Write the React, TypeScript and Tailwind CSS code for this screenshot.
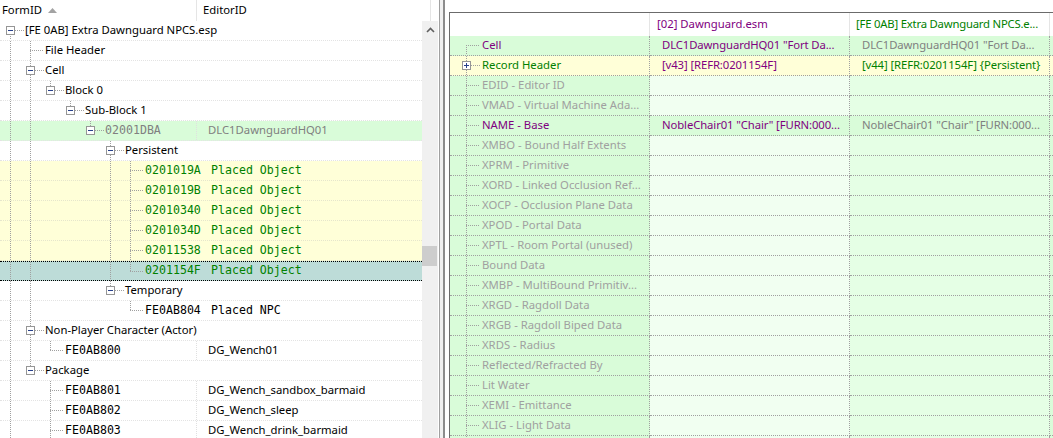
import React from "react";

type Self = "full" | "top" | "bottom";

// dotted tree guides, drawn per row
function Guides({
  depth,
  full = [],
  self,
  box = false,
  plus = false,
  base = 10,
  width,
}: {
  depth: number;
  full?: number[];
  self?: Self;
  box?: boolean;
  plus?: boolean;
  base?: number;
  width?: number;
}) {
  const px = (l: number) => base + 20 * l;
  const n = px(depth);
  const xd = n + 0.5;
  const w = width ?? 20 * depth + 25;
  const dash = { stroke: "#a0a0a0", strokeDasharray: "1 1" };
  return (
    <svg width={w} height={19} className="shrink-0" shapeRendering="crispEdges">
      {full.map((l) => (
        <line key={l} x1={px(l) + 0.5} x2={px(l) + 0.5} y1={0} y2={19} {...dash} />
      ))}
      {self && (
        <line
          x1={xd}
          x2={xd}
          y1={self === "bottom" ? 9 : 0}
          y2={self === "top" ? 10 : 19}
          {...dash}
        />
      )}
      <line x1={box ? n + 5 : n} x2={n + 14} y1={9.5} y2={9.5} {...dash} />
      {box && (
        <g>
          <rect x={n - 3.5} y={5.5} width={8} height={8} fill="#fff" stroke="#969696" />
          <line x1={n - 2} x2={n + 3} y1={9.5} y2={9.5} stroke="#27408b" />
          {plus && <line x1={xd} x2={xd} y1={7} y2={12} stroke="#27408b" />}
        </g>
      )}
    </svg>
  );
}

type TreeRow = {
  d: number;
  full: number[];
  self: Self;
  box?: boolean;
  label?: string;
  id?: string;
  editor?: string;
  mono?: string;
  tone?: "ref" | "yellow" | "selected";
};

const PLACED = ["0201019A", "0201019B", "02010340", "0201034D", "02011538", "0201154F"];

const TREE: TreeRow[] = [
  { d: 0, full: [], self: "bottom", box: true, label: "[FE 0AB] Extra Dawnguard NPCS.esp" },
  { d: 1, full: [0], self: "full", label: "File Header" },
  { d: 1, full: [0], self: "full", box: true, label: "Cell" },
  { d: 2, full: [0, 1], self: "top", box: true, label: "Block 0" },
  { d: 3, full: [0, 1], self: "top", box: true, label: "Sub-Block 1" },
  { d: 4, full: [0, 1], self: "top", box: true, id: "02001DBA", editor: "DLC1DawnguardHQ01", tone: "ref" },
  { d: 5, full: [0, 1], self: "full", box: true, label: "Persistent" },
  ...PLACED.map((id, i): TreeRow => ({
    d: 6,
    full: [0, 1, 5],
    self: i === PLACED.length - 1 ? "top" : "full",
    id,
    mono: "Placed Object",
    tone: i === PLACED.length - 1 ? "selected" : "yellow",
  })),
  { d: 5, full: [0, 1], self: "top", box: true, label: "Temporary" },
  { d: 6, full: [0, 1], self: "top", id: "FE0AB804", mono: "Placed NPC" },
  { d: 1, full: [0], self: "full", box: true, label: "Non-Player Character (Actor)" },
  { d: 2, full: [0, 1], self: "top", id: "FE0AB800", editor: "DG_Wench01" },
  { d: 1, full: [0], self: "top", box: true, label: "Package" },
  { d: 2, full: [0], self: "full", id: "FE0AB801", editor: "DG_Wench_sandbox_barmaid" },
  { d: 2, full: [0], self: "full", id: "FE0AB802", editor: "DG_Wench_sleep" },
  { d: 2, full: [0], self: "full", id: "FE0AB803", editor: "DG_Wench_drink_barmaid" },
];

const MONO = "font-['DejaVu_Sans_Mono',monospace] text-[11.6px]";

function TreeLine({ r }: { r: TreeRow }) {
  const guides = <Guides depth={r.d} full={r.full} self={r.self} box={r.box} />;

  let rowCls = "flex h-[20px] items-center border-b border-dotted border-[#e3e3e3] whitespace-nowrap";
  if (r.tone === "ref") rowCls = "flex h-[20px] items-center border-b border-dotted border-[#e3e3e3] bg-[#d9fcd9] whitespace-nowrap";
  if (r.tone === "yellow") rowCls = "flex h-[20px] items-center border-b border-dotted border-[#e6e6cc] bg-[#ffffd8] whitespace-nowrap";
  if (r.tone === "selected")
    rowCls = "flex h-[20px] items-center border-y border-dotted border-black bg-[#bddcd8] whitespace-nowrap";

  if (r.editor) {
    return (
      <div className={rowCls}>
        <div className="flex h-full w-[197px] items-center border-r border-dotted border-[#e0e0e0]">
          {guides}
          <span className={`${MONO} ${r.tone === "ref" ? "text-[#808080]" : "text-black"}`}>{r.id}</span>
        </div>
        <div className={`pl-[11px] ${r.tone === "ref" ? "text-[#808080]" : "text-black"}`}>{r.editor}</div>
      </div>
    );
  }

  if (r.mono) {
    const color = r.tone ? "text-[#008000]" : "text-black";
    return (
      <div className={rowCls}>
        {guides}
        <span className={`${MONO} ${color} inline-block w-[66px]`}>{r.id}</span>
        <span className={`${MONO} ${color}`}>{r.mono}</span>
      </div>
    );
  }

  return (
    <div className={rowCls}>
      {guides}
      <span>{r.label}</span>
    </div>
  );
}

function LeftPanel() {
  return (
    <div className="flex w-[439px] shrink-0 flex-col">
      <div className="flex h-[21px] shrink-0">
        <div className="flex h-full w-[197px] items-center border-r border-[#e5e5e5] pl-[2px]">
          <span>FormID</span>
          <svg width="9" height="5" className="ml-[6px]">
            <polygon points="0,5 4.5,0 9,5" fill="#a3a3a3" />
          </svg>
        </div>
        <div className="flex h-full w-[234px] items-center border-r border-[#e5e5e5] pl-[6px]">EditorID</div>
      </div>
      <div className="flex min-h-0 flex-1">
        <div className="w-[422px] shrink-0 overflow-hidden">
          {TREE.map((r, i) => (
            <TreeLine key={i} r={r} />
          ))}
        </div>
        {/* scrollbar */}
        <div className="flex w-[16px] shrink-0 flex-col bg-[#f0f0f0]">
          <div className="flex h-[17px] items-center justify-center">
            <svg width="9" height="6">
              <polyline points="1,5 4.5,1.5 8,5" stroke="#606060" strokeWidth="1.6" fill="none" />
            </svg>
          </div>
          <div className="h-[208px]" />
          <div className="h-[20px] w-[15px] bg-[#cdcdcd]" />
        </div>
        <div className="w-[1px]" />
      </div>
    </div>
  );
}

type Rec = { name: string; kind: "main" | "header" | "empty" | "value"; a?: string; b?: string };

const RECORDS: Rec[] = [
  { name: "Cell", kind: "main", a: 'DLC1DawnguardHQ01 "Fort Da...', b: 'DLC1DawnguardHQ01 "Fort Da...' },
  { name: "Record Header", kind: "header", a: "[v43] [REFR:0201154F]", b: "[v44] [REFR:0201154F] {Persistent}" },
  { name: "EDID - Editor ID", kind: "empty" },
  { name: "VMAD - Virtual Machine Ada...", kind: "empty" },
  { name: "NAME - Base", kind: "value", a: 'NobleChair01 "Chair" [FURN:000...', b: 'NobleChair01 "Chair" [FURN:000...' },
  { name: "XMBO - Bound Half Extents", kind: "empty" },
  { name: "XPRM - Primitive", kind: "empty" },
  { name: "XORD - Linked Occlusion Ref...", kind: "empty" },
  { name: "XOCP - Occlusion Plane Data", kind: "empty" },
  { name: "XPOD - Portal Data", kind: "empty" },
  { name: "XPTL - Room Portal (unused)", kind: "empty" },
  { name: "Bound Data", kind: "empty" },
  { name: "XMBP - MultiBound Primitiv...", kind: "empty" },
  { name: "XRGD - Ragdoll Data", kind: "empty" },
  { name: "XRGB - Ragdoll Biped Data", kind: "empty" },
  { name: "XRDS - Radius", kind: "empty" },
  { name: "Reflected/Refracted By", kind: "empty" },
  { name: "Lit Water", kind: "empty" },
  { name: "XEMI - Emittance", kind: "empty" },
  { name: "XLIG - Light Data", kind: "empty" },
  { name: "", kind: "empty" },
];

function RecordRow({ r, first }: { r: Rec; first: boolean }) {
  let bg1 = "bg-[#d9fcd9]";
  let bg2 = "bg-[#f1fff1]";
  let bg3 = "bg-[#e5ffe5]";
  let nameColor = "text-[#a0a0a0]";
  let aColor = "text-[#800080]";
  let bColor = "text-[#808080]";
  if (r.kind === "main" || r.kind === "value") {
    bg2 = "bg-[#d9fcd9]";
    bg3 = "bg-[#d9fcd9]";
    nameColor = "text-[#800080]";
  }
  if (r.kind === "header") {
    bg1 = "bg-[#ffffd8]";
    bg2 = "bg-[#ffffd8]";
    bg3 = "bg-[#ffffd8]";
    nameColor = "text-[#008000]";
    bColor = "text-[#008000]";
  }
  return (
    <div className="flex h-[20px] whitespace-nowrap">
      <div className={`flex w-[200px] shrink-0 items-center overflow-hidden border-r border-b border-dotted border-[#a0a0a0] ${bg1}`}>
        <Guides
          depth={0}
          base={16}
          width={32}
          self={first ? "bottom" : "full"}
          box={r.kind === "header"}
          plus
        />
        <span className={nameColor}>{r.name}</span>
      </div>
      <div className={`flex w-[200px] shrink-0 items-center overflow-hidden border-r border-b border-dotted border-[#a0a0a0] pl-[12px] tracking-[-0.1px] ${bg2} ${aColor}`}>
        {r.a}
      </div>
      <div className={`flex w-[200px] shrink-0 items-center overflow-hidden border-r border-b border-dotted border-[#a0a0a0] pl-[12px] tracking-[-0.1px] ${bg3} ${bColor}`}>
        {r.b}
      </div>
      <div className={`flex-1 border-b border-dotted border-[#a0a0a0] ${r.kind === "header" ? "bg-[#ffffd8]" : "bg-[#d9fcd9]"}`} />
    </div>
  );
}

function RightPanel() {
  return (
    <div className="mt-[12px] flex min-w-0 flex-1 flex-col overflow-hidden border-l border-t border-[#6b6b6b]">
      <div className="flex h-[23px] shrink-0 whitespace-nowrap">
        <div className="w-[200px] shrink-0 border-r border-[#e5e5e5]" />
        <div className="flex w-[200px] shrink-0 items-center border-r border-[#e5e5e5] pl-[7px] text-[#800080]">
          [02] Dawnguard.esm
        </div>
        <div className="flex w-[200px] shrink-0 items-center overflow-hidden border-r border-[#e5e5e5] pl-[6px] tracking-[-0.2px] text-[#008000]">
          [FE 0AB] Extra Dawnguard NPCS.e...
        </div>
        <div className="flex-1" />
      </div>
      <div className="min-h-0 flex-1">
        {RECORDS.map((r, i) => (
          <RecordRow key={i} r={r} first={i === 0} />
        ))}
      </div>
    </div>
  );
}

export default function App() {
  return (
    <div className="flex h-[438px] w-[1053px] overflow-hidden bg-white font-['Noto_Sans',sans-serif] text-[11.3px] text-black">
      <LeftPanel />
      {/* splitter */}
      <div className="flex shrink-0">
        <div className="w-[1px] bg-[#a0a0a0]" />
        <div className="w-[3px] bg-[#f0f0f0]" />
        <div className="w-[2px] bg-[#8c8c8c]" />
        <div className="w-[4px] bg-white" />
      </div>
      <RightPanel />
    </div>
  );
}
